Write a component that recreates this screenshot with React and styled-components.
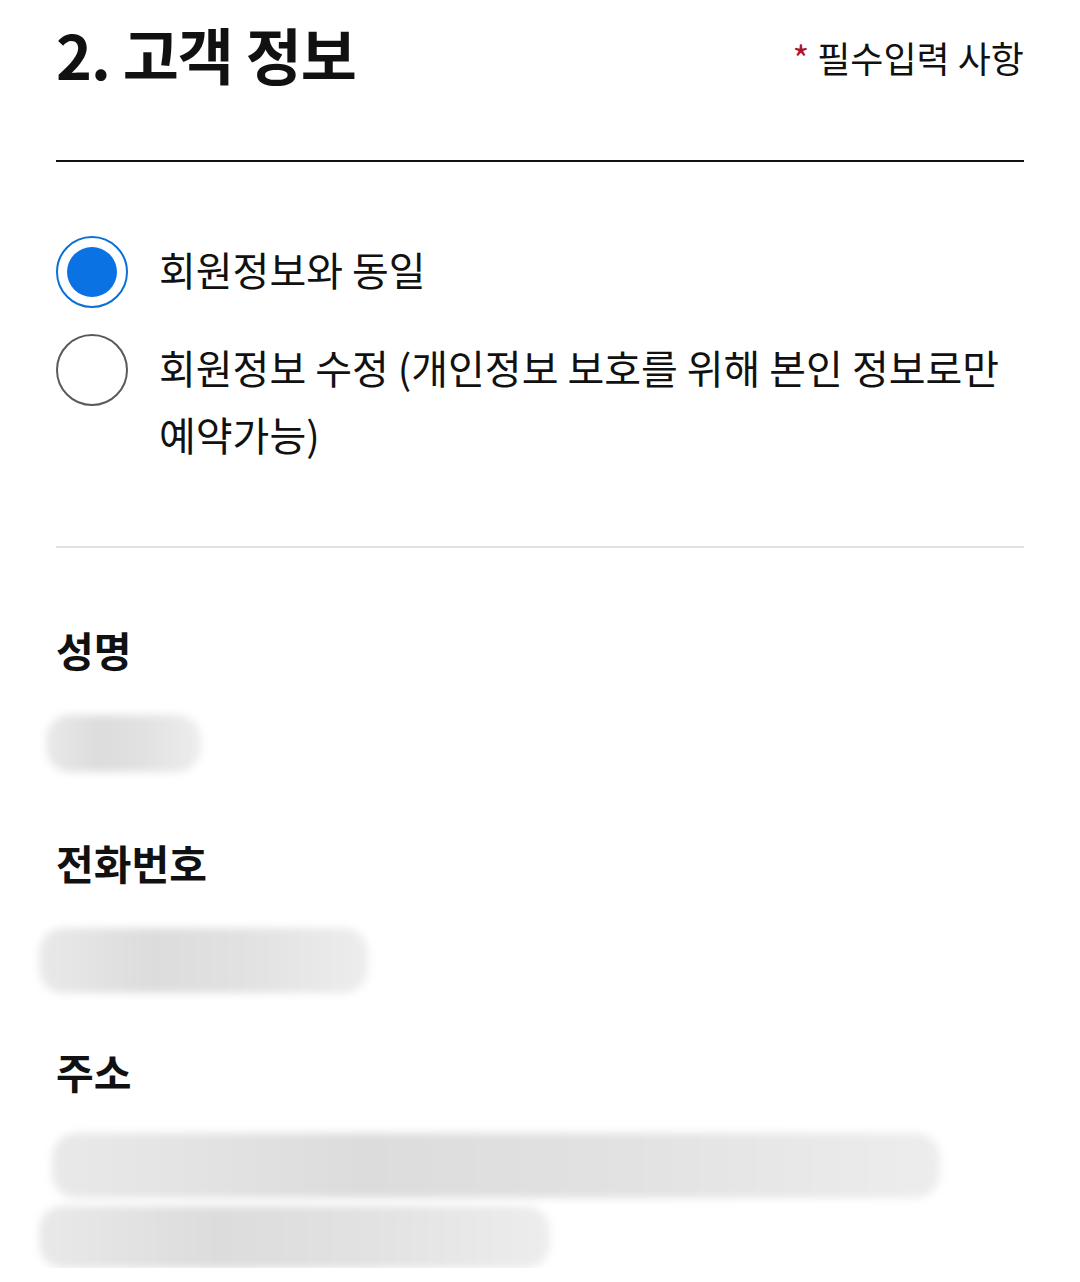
import React, { useState } from 'react'
import styled, { createGlobalStyle } from 'styled-components'

const GlobalStyle = createGlobalStyle`
    html, body {
        margin: 0;
        padding: 0;
        background: #fff;
    }
    body {
        font-family: "Noto Sans CJK KR", "Noto Sans", sans-serif;
        color: #111;
    }
`

const Page = styled.div`
    width: 1080px;
    padding: 0 56px;
    box-sizing: border-box;
`

const Header = styled.div`
    display: flex;
    justify-content: space-between;
    align-items: flex-start;
    padding-top: 5px;
    padding-bottom: 57px;
    border-bottom: 2px solid #111;

    h2 {
        margin: 0;
        font-size: 61px;
        font-weight: 700;
        line-height: 1.6;
        letter-spacing: -1px;
    }
`

const Required = styled.span`
    margin-top: 27px;
    font-size: 36px;
    line-height: 1.4;
    color: #111;

    em {
        font-style: normal;
        color: #b0102a;
        margin-right: 8px;
    }
`

const Options = styled.div`
    display: flex;
    flex-direction: column;
    gap: 26px;
    padding: 74px 0 78px;
    border-bottom: 2px solid #e2e2e2;
`

const Option = styled.label`
    display: flex;
    align-items: flex-start;
    gap: 31px;
    cursor: pointer;
`

const Radio = styled.span`
    flex: none;
    width: 72px;
    height: 72px;
    box-sizing: border-box;
    border-radius: 50%;
    border: 2px solid ${p => (p.$checked ? '#0b6fd8' : '#5a5a5a')};
    display: flex;
    align-items: center;
    justify-content: center;

    &::after {
        content: '';
        width: 50px;
        height: 50px;
        border-radius: 50%;
        background: #0a72e3;
        display: ${p => (p.$checked ? 'block' : 'none')};
    }
`

const OptionText = styled.span`
    font-size: 40px;
    line-height: 67px;
    color: #111;
    word-break: keep-all;
`

const Field = styled.div`
    padding-top: ${p => p.$top}px;

    h3 {
        margin: 0;
        font-size: 41px;
        font-weight: 700;
        line-height: 53px;
    }
`

const Values = styled.div`
    display: flex;
    flex-direction: column;
    gap: 8px;
    margin-top: ${p => p.$gap}px;
`

const Redacted = styled.div`
    width: ${p => p.$w}px;
    height: ${p => p.$h}px;
    margin-left: ${p => p.$x}px;
    background: linear-gradient(90deg, #e9e9e9, #dcdcdc 35%, #e2e2e2 65%, #ededed);
    border-radius: 24px;
    filter: blur(4px);
`

export default function App() {
    const [same, setSame] = useState(true)

    return (
        <Page>
            <GlobalStyle />
            <Header>
                <h2>2. 고객 정보</h2>
                <Required><em>*</em>필수입력 사항</Required>
            </Header>

            <Options>
                <Option onClick={() => setSame(true)}>
                    <Radio $checked={same} />
                    <OptionText>회원정보와 동일</OptionText>
                </Option>
                <Option onClick={() => setSame(false)}>
                    <Radio $checked={!same} />
                    <OptionText>회원정보 수정 (개인정보 보호를 위해 본인 정보로만 예약가능)</OptionText>
                </Option>
            </Options>

            <Field $top={75}>
                <h3>성명</h3>
                <Values $gap={39}>
                    <Redacted $w={155} $h={57} $x={-10} />
                </Values>
            </Field>

            <Field $top={64}>
                <h3>전화번호</h3>
                <Values $gap={39}>
                    <Redacted $w={329} $h={65} $x={-17} />
                </Values>
            </Field>

            <Field $top={52}>
                <h3>주소</h3>
                <Values $gap={35}>
                    <Redacted $w={888} $h={65} $x={-4} />
                    <Redacted $w={511} $h={62} $x={-17} />
                </Values>
            </Field>
        </Page>
    )
}
